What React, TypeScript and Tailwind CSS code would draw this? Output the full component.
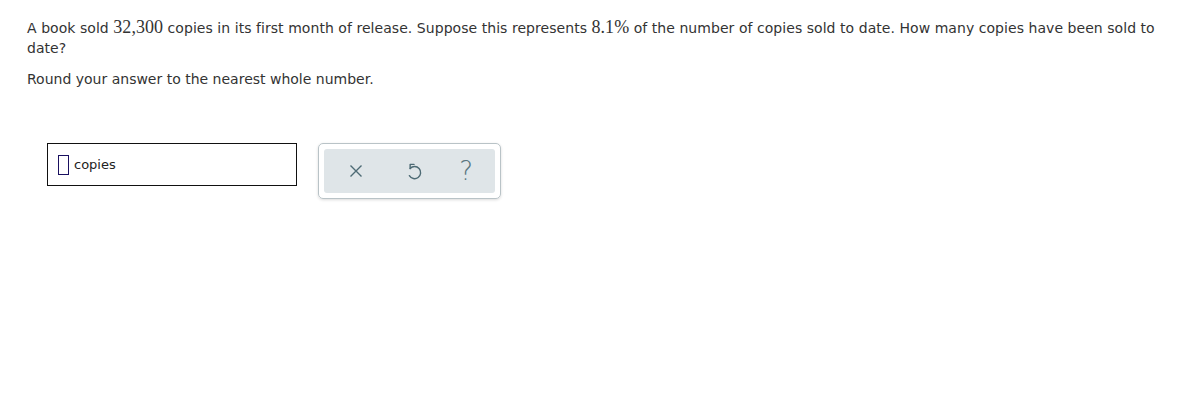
import React from "react";

const serif = "inline-block font-['Liberation_Serif',serif] text-[18px] leading-[20px]";

export default function App() {
  return (
    <div className="w-[1179px] h-[405px] bg-white text-[#333] font-['DejaVu_Sans','Verdana',sans-serif] text-[14px]">
      <div className="pl-[27px] pr-[10px] pt-[17px]">
        <p className="leading-[20px] tracking-[0.05px] whitespace-nowrap">
          <span>A book sold </span>
          <span className={serif}>32,300</span>
          <span> copies in its first month of release. Suppose this represents </span>
          <span className={serif}>8.1%</span>
          <span> of the number of copies sold to date. How many copies have been sold to</span>
          <br />
          <span>date?</span>
        </p>
        <p className="leading-[20px] mt-[11px]">Round your answer to the nearest whole number.</p>
      </div>
      <div className="flex items-start pl-[47px] mt-[54px] gap-[21px]">
        <div className="w-[250px] h-[43px] border border-[#111] flex items-center pl-[10px] gap-[5px]">
          <div className="w-[11px] h-[20px] border border-[#1a1060]" />
          <span className="text-[13px] text-[#222]">copies</span>
        </div>
        <div className="w-[183px] h-[56px] rounded-[5px] border border-[#b9c3c7] shadow-[0_1px_3px_rgba(0,0,0,0.15)] p-[5px]">
          <div className="w-full h-full bg-[#dfe5e8] rounded-[3px] flex items-center justify-between px-[21px] text-[#4d6a74]">
            <svg width="16" height="16" viewBox="0 0 16 16" className="ml-[3px]">
              <path d="M2.5 2.5 L13.5 13.5 M13.5 2.5 L2.5 13.5" stroke="currentColor" strokeWidth="1.4" fill="none" />
            </svg>
            <svg width="18" height="22" viewBox="0 0 16 20" className="ml-[5px]">
              <path d="M4.5 7.7 A5.5 5.5 0 1 1 3.8 14.3" stroke="currentColor" strokeWidth="1.3" fill="none" strokeLinecap="round" />
              <path d="M8 4 L4.5 4 L4.5 7.7" stroke="currentColor" strokeWidth="1.3" fill="none" strokeLinecap="round" strokeLinejoin="round" />
            </svg>
            <span className="text-[26px] leading-none font-['DejaVu_Sans',sans-serif] font-extralight text-[#5a7680] mr-[1px]">?</span>
          </div>
        </div>
      </div>
    </div>
  );
}
